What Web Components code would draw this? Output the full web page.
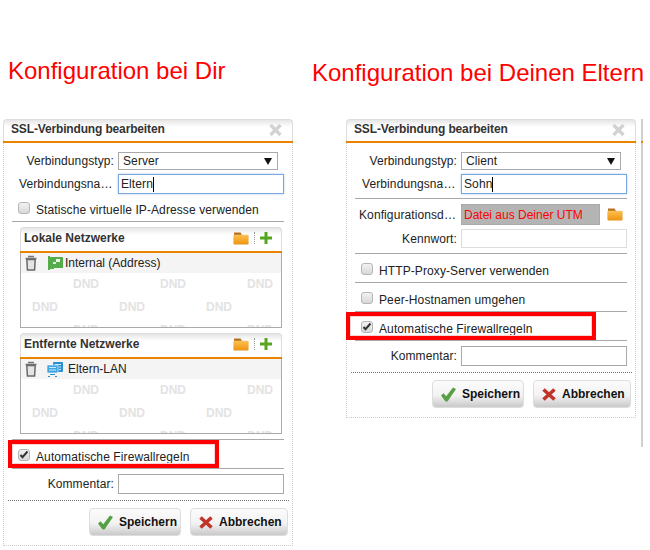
<!DOCTYPE html>
<html lang="de">
<head>
<meta charset="utf-8">
<title>SSL-Verbindung</title>
<style>
  body { margin: 0; background: #fff; font: 12px "Liberation Sans", Arial, sans-serif; color: #222; }
</style>
</head>
<body>
<ssl-page>
  <ssl-column heading="Konfiguration bei Dir" top="57" inset="3" pad="8">
    <ssl-dialog heading="SSL-Verbindung bearbeiten">
      <form-row label="Verbindungstyp:"><fake-select value="Server"></fake-select></form-row>
      <form-row label="Verbindungsname:" gap="4" fit="95"><text-box value="Eltern" focused></text-box></form-row>
      <check-row label="Statische virtuelle IP-Adresse verwenden" tight></check-row>
      <rule-line></rule-line>
      <net-box heading="Lokale Netzwerke" item="Internal (Address)" kind="card"></net-box>
      <net-box heading="Entfernte Netzwerke" item="Eltern-LAN" kind="lan"></net-box>
      <rule-line top="5"></rule-line>
      <check-row label="Automatische Firewallregeln" checked mark="211" markx="-4"></check-row>
      <rule-line></rule-line>
      <form-row label="Kommentar:" gap="5"><text-box></text-box></form-row>
    </ssl-dialog>
  </ssl-column>
  <ssl-column heading="Konfiguration bei Deinen Eltern" top="59" inset="34" pad="0" edge>
    <ssl-dialog heading="SSL-Verbindung bearbeiten">
      <form-row label="Verbindungstyp:"><fake-select value="Client"></fake-select></form-row>
      <form-row label="Verbindungsname:" gap="4" fit="95"><text-box value="Sohn" focused></text-box></form-row>
      <rule-line top="4"></rule-line>
      <form-row label="Konfigurationsdatei:" gap="5" fit="98"><file-box value="Datei aus Deiner UTM"></file-box></form-row>
      <form-row label="Kennwort:" gap="4"><text-box pale></text-box></form-row>
      <rule-line top="5"></rule-line>
      <check-row label="HTTP-Proxy-Server verwenden"></check-row>
      <rule-line></rule-line>
      <check-row label="Peer-Hostnamen umgehen"></check-row>
      <rule-line></rule-line>
      <check-row label="Automatische Firewallregeln" checked mark="250" markx="-9"></check-row>
      <rule-line></rule-line>
      <form-row label="Kommentar:" gap="5"><text-box></text-box></form-row>
    </ssl-dialog>
  </ssl-column>
</ssl-page>

<script>
const FOLDER = `<svg width="16" height="13" viewBox="0 0 16 13"><path d="M1 .5h6.5l1.5 2.5H1z" fill="#b8701c"/><rect x=".5" y="3" width="15" height="9.5" rx="1" fill="url(#f)" stroke="#e8c48a" stroke-width=".5"/><defs><linearGradient id="f" x1="0" y1="0" x2="0" y2="1"><stop offset="0" stop-color="#fdbf4a"/><stop offset="1" stop-color="#ee9413"/></linearGradient></defs></svg>`;
const PLUS = `<svg width="12" height="12" viewBox="0 0 12 12"><path d="M4.5 0h3v4.5H12v3H7.5V12h-3V7.5H0v-3h4.5z" fill="#55a51f"/></svg>`;
const TRASH = `<svg width="12" height="16" viewBox="0 0 12 16"><path d="M3 1.6h6M.5 3.6h11" stroke="#777" stroke-width="1.5" fill="none"/><path d="M1.8 4.5l.6 10.4h7.2l.6-10.4z" fill="#e4e4e4" stroke="#6a6a6a" stroke-width="1.5"/></svg>`;
const CARD = `<svg width="15" height="14" viewBox="0 0 15 14"><path d="M0 0h2v1h12a1 1 0 0 1 1 1v10h-9v1H2v1H0z" fill="#54ad4a"/><rect x="8" y="3" width="4" height="3" fill="#e9f7e4"/><rect x="5" y="6" width="3" height="2" fill="#d6efd0"/></svg>`;
const LAN = `<svg width="16" height="15" viewBox="0 0 16 15"><rect x="6" y="0" width="10" height="10" rx="1" fill="#2d8fd0"/><rect x="0" y="3" width="11" height="8" rx="1" fill="#3fa6e4" stroke="#fff" stroke-width=".6"/><path d="M2 5.5h7M2 8h7M8 2.5h6M12 5h2M12 7.5h2" stroke="#cdeafa"/><path d="M3 12h5v1H3zM1 14h2v1H1zM8 14h2v1H8z" fill="#2d8fd0"/></svg>`;

class SslPage extends HTMLElement {
  constructor() {
    super();
    this.attachShadow({ mode: "open" }).innerHTML = `
      <style>
        :host { display: grid; grid-template-columns: 312px 338px; width: 650px; height: 550px; overflow: hidden; }
      </style>
      <slot></slot>`;
  }
}

class SslColumn extends HTMLElement {
  connectedCallback() {
    const top = +this.getAttribute("top");
    const edge = this.hasAttribute("edge");
    this.attachShadow({ mode: "open" }).innerHTML = `
      <style>
        :host { display: block; }
        h1 {
          margin: ${top}px 0 0 ${this.getAttribute("pad")}px; height: ${119 - top}px;
          font: 24px/28px "Liberation Sans", Arial, sans-serif; color: #f00; white-space: nowrap;
        }
        .wrap { display: flex; margin-left: ${this.getAttribute("inset")}px; }
        .edge {
          width: 2px; height: 328px; margin-left: 5px;
          background: linear-gradient(#d0d0d0 22px, #e98300 22px, #e98300 24px, #d0d0d0 24px);
        }
      </style>
      <h1>${this.getAttribute("heading")}</h1>
      <div class="wrap"><slot></slot>${edge ? '<div class="edge"></div>' : ""}</div>`;
  }
}

class SslDialog extends HTMLElement {
  connectedCallback() {
    this.attachShadow({ mode: "open" }).innerHTML = `
      <style>
        :host { display: block; width: 290px; flex: none; }
        .title {
          display: flex; justify-content: space-between; align-items: center;
          height: 22px; padding: 0 10px 3px 7px; box-sizing: border-box;
          border: 1px solid #ddd; border-bottom: 0; border-radius: 4px 4px 0 0;
          background: linear-gradient(#e6e6e6, #fff 7px);
          font-weight: bold; letter-spacing: -.15px; color: #333;
        }
        .title svg { margin-top: 2px; }
        .line { height: 2px; background: #e98300; }
        .body { border: 1px dotted #ccc; border-top: 0; }
        .form { padding: 9px 8px 6px; }
        .foot {
          margin: 0 3px 0 4px; padding: 7px 1px 9px 0; border-top: 1px dotted #777;
          display: flex; justify-content: flex-end; gap: 9px;
        }
      </style>
      <div class="title"><span>${this.getAttribute("heading")}</span>
        <svg width="13" height="12" viewBox="0 0 13 12"><path d="M1.5 1l10 10M11.5 1l-10 10" stroke="#d2d2d2" stroke-width="3.4"/></svg>
      </div>
      <div class="line"></div>
      <div class="body">
        <div class="form"><slot></slot></div>
        <div class="foot">
          <dlg-button label="Speichern" kind="ok"></dlg-button>
          <dlg-button label="Abbrechen" kind="no"></dlg-button>
        </div>
      </div>`;
  }
}

class FormRow extends HTMLElement {
  connectedCallback() {
    this.attachShadow({ mode: "open" }).innerHTML = `
      <style>
        :host { display: grid; grid-template-columns: 102px 166px; column-gap: 4px; align-items: center; margin-top: ${this.getAttribute("gap") || 0}px; }
        label {
          width: ${this.getAttribute("fit") || 102}px; justify-self: end; text-align: right;
          overflow: hidden; white-space: nowrap; text-overflow: ellipsis; letter-spacing: .1px;
        }
      </style>
      <label>${this.getAttribute("label")}</label><slot></slot>`;
  }
}

class FakeSelect extends HTMLElement {
  connectedCallback() {
    this.attachShadow({ mode: "open" }).innerHTML = `
      <style>
        :host {
          display: flex; align-items: center; justify-content: space-between; box-sizing: border-box;
          width: 160px; height: 18px; padding: 0 5px 0 4px; border: 1px solid #a9a9a9; background: #fff;
          letter-spacing: .1px;
        }
      </style>
      <span>${this.getAttribute("value")}</span>
      <svg width="8" height="7" viewBox="0 0 8 7"><path d="M0 0h8L4 7z" fill="#111"/></svg>`;
  }
}

class TextBox extends HTMLElement {
  connectedCallback() {
    const focused = this.hasAttribute("focused");
    const pale = this.hasAttribute("pale");
    const border = focused ? "1px solid #7ba6e0" : pale ? "1px solid #ddd" : "1px solid #a9a9a9";
    const value = this.getAttribute("value") || "";
    this.attachShadow({ mode: "open" }).innerHTML = `
      <style>
        :host {
          display: flex; align-items: center; box-sizing: border-box; height: ${pale ? 19 : 20}px;
          padding: 0 2px; border: ${border}; background: #fff; letter-spacing: .1px;
          ${focused ? "box-shadow: 0 0 2px #a9c6ee;" : ""}
        }
        i { width: 1px; height: 15px; background: #000; }
      </style>
      <span>${value}</span>${focused ? "<i></i>" : ""}`;
  }
}

class FileBox extends HTMLElement {
  connectedCallback() {
    this.attachShadow({ mode: "open" }).innerHTML = `
      <style>
        :host { display: flex; align-items: center; gap: 7px; }
        div { width: 139px; height: 21px; box-sizing: border-box; padding: 0 2px; line-height: 20px; background: #b4b4b4; border: 1px solid #a9a9a9; color: #f00; white-space: nowrap; }
        svg { display: block; }
      </style>
      <div>${this.getAttribute("value")}</div>${FOLDER}`;
  }
}

class CheckRow extends HTMLElement {
  connectedCallback() {
    const mark = this.getAttribute("mark");
    const tight = this.hasAttribute("tight");
    this.attachShadow({ mode: "open" }).innerHTML = `
      <style>
        :host { display: flex; position: relative; height: 28px; margin-top: ${tight ? -1 : 0}px; padding: 9px 0 0 6px; box-sizing: border-box; letter-spacing: .1px; }
        .box {
          width: 12px; height: 12px; box-sizing: border-box; border: 1px solid #b5b5b5; border-radius: 3px;
          background: linear-gradient(#f2f2f2, #d8d8d8); flex: none;
        }
        .box svg { display: block; }
        span { margin-left: 6px; line-height: 17px; white-space: nowrap; }
        .mark {
          position: absolute; left: ${this.getAttribute("markx")}px; top: 0; width: ${mark}px; height: 28px; box-sizing: border-box;
          border: 4px solid #f00; box-shadow: inset 0 0 0 1px #f9d4d4;
        }
      </style>
      <div class="box">${this.hasAttribute("checked") ? '<svg width="10" height="10" viewBox="0 0 10 10"><path d="M1.5 5l2 2.2L8.5 1.5" stroke="#333" stroke-width="2" fill="none"/></svg>' : ""}</div>
      <span>${this.getAttribute("label")}</span>
      ${mark ? '<div class="mark"></div>' : ""}`;
  }
}

class RuleLine extends HTMLElement {
  connectedCallback() {
    this.attachShadow({ mode: "open" }).innerHTML = `
      <style>
        :host { display: block; height: 1px; background: #a9a9a9; margin-top: ${this.getAttribute("top") || 0}px; }
      </style>`;
  }
}

class NetBox extends HTMLElement {
  connectedCallback() {
    const dnd = "<b>DND</b><b>DND</b><b>DND</b>";
    const card = this.getAttribute("kind") === "card";
    this.attachShadow({ mode: "open" }).innerHTML = `
      <style>
        :host { display: block; width: 262px; margin: 5px 0 0 8px; box-sizing: border-box; height: 101px; }
        .head {
          display: flex; align-items: center; height: 24px; box-sizing: border-box; padding: 0 9px 3px 3px;
          border: 1px solid #ddd; border-bottom: 0; border-radius: 4px 4px 0 0;
          background: linear-gradient(#e6e6e6, #fff 7px);
          font-weight: bold; color: #333;
        }
        .head span { flex: 1; }
        .dots { width: 0; height: 12px; border-left: 1px dotted #999; margin: 0 5px 0 5px; }
        .line { height: 2px; background: #e98300; }
        .list { height: 75px; box-sizing: border-box; border: 1px solid #aaa; border-top: 0; overflow: hidden; }
        .item { display: flex; align-items: center; height: 20px; background: #f4f4f4; padding-left: 4px; }
        .item svg:first-child { margin-right: ${card ? 11 : 10}px; }
        .item span { margin-left: ${card ? 2 : 5}px; }
        .wm { display: flex; gap: 61px; height: 23px; font-weight: bold; color: #e3e3e3; line-height: 23px; white-space: nowrap; }
        .a { padding-left: 52px; }
        .b { padding-left: 11px; }
      </style>
      <div class="head"><span>${this.getAttribute("heading")}</span>${FOLDER}<i class="dots"></i>${PLUS}</div>
      <div class="line"></div>
      <div class="list">
        <div class="item">${TRASH}${card ? CARD : LAN}<span>${this.getAttribute("item")}</span></div>
        <div class="wm a">${dnd}</div>
        <div class="wm b">${dnd}</div>
        <div class="wm a">${dnd}</div>
      </div>`;
  }
}

class DlgButton extends HTMLElement {
  connectedCallback() {
    const ok = this.getAttribute("kind") === "ok";
    const icon = ok
      ? '<svg width="15" height="15" viewBox="0 0 15 15"><path d="M0 8.5l2.6-2.2 2.6 3L12 .5l3 1.5L6.5 14.5h-2z" fill="#55a044"/></svg>'
      : '<svg width="14" height="13" viewBox="0 0 14 13"><path d="M1.5 1.5l11 10M12.5 1.5l-11 10" stroke="#c0352a" stroke-width="3.6"/></svg>';
    this.attachShadow({ mode: "open" }).innerHTML = `
      <style>
        :host {
          display: flex; align-items: center; gap: 6px; box-sizing: border-box; height: 28px;
          padding: 0 0 0 8px; width: ${ok ? 92 : 98}px;
          border: 1px solid #ddd; border-radius: 4px;
          background: linear-gradient(#fbfbfb, #f3f3f3 55%, #c9c9c9);
          font-weight: bold; color: #111;
        }
      </style>
      ${icon}<span>${this.getAttribute("label")}</span>`;
  }
}

customElements.define("ssl-page", SslPage);
customElements.define("ssl-column", SslColumn);
customElements.define("ssl-dialog", SslDialog);
customElements.define("form-row", FormRow);
customElements.define("fake-select", FakeSelect);
customElements.define("text-box", TextBox);
customElements.define("file-box", FileBox);
customElements.define("check-row", CheckRow);
customElements.define("rule-line", RuleLine);
customElements.define("net-box", NetBox);
customElements.define("dlg-button", DlgButton);
</script>
</body>
</html>
